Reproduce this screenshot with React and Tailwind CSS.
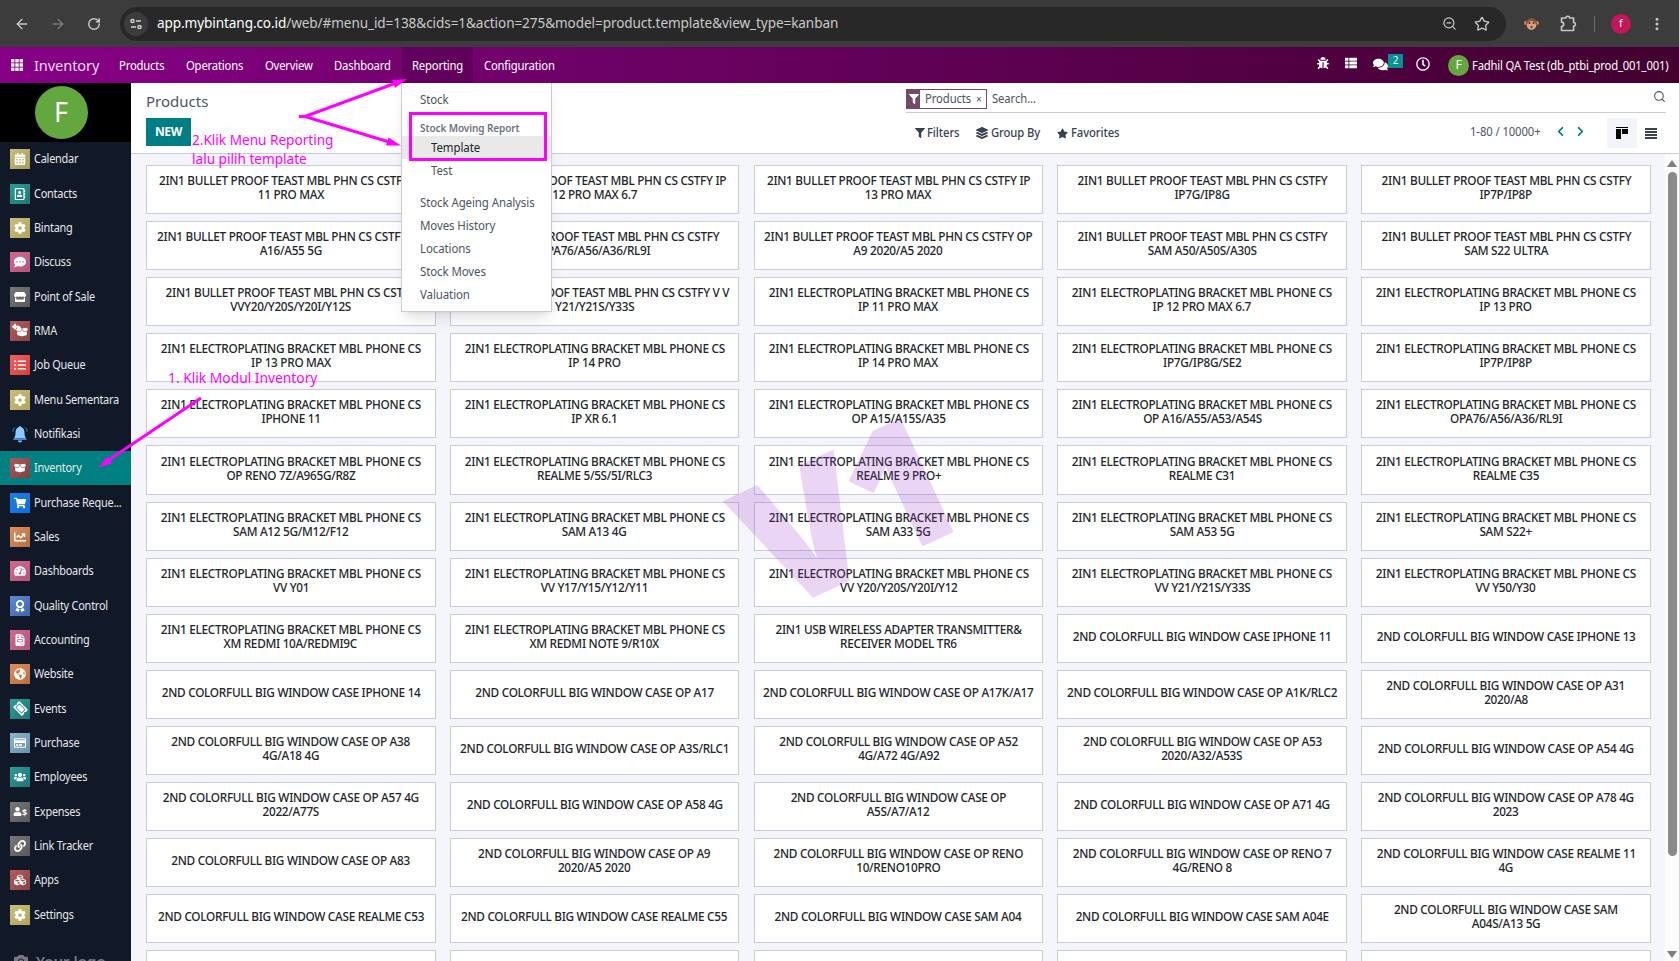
import { FaStar, FaFilter, FaLayerGroup, FaBug, FaComments, FaRegClock, FaCog, FaCalendarAlt, FaRegAddressBook, FaCommentDots, FaStore, FaBoxOpen, FaListUl, FaShoppingCart, FaChartLine, FaTachometerAlt, FaAward, FaGlobeAmericas, FaTicketAlt, FaRegCreditCard, FaUsers, FaLink, FaCubes, FaChevronLeft, FaChevronRight, FaThList, FaReply, FaUser, FaCamera } from "react-icons/fa";
import { FaFileInvoice } from "react-icons/fa6";
import { ArrowLeft, ArrowRight, RotateCw, ZoomOut, Star, MoreVertical, Search } from "lucide-react";

// Condensed label, keeps its left edge
const Narrow = ({ children }) => (
  <span className="inline-block origin-left scale-x-[0.91] whitespace-nowrap">{children}</span>
);

const RmaIcon = () => (
  <div className="relative size-5">
    <FaReply className="absolute top-[2px] left-[2px]" size={9} />
    <FaBoxOpen className="absolute right-[2px] bottom-[3px]" size={12} />
  </div>
);

const ExpenseIcon = () => (
  <div className="flex items-end">
    <FaUser size={9} />
    <span className="-mb-[2px] text-[9px] leading-[10px] font-bold">$</span>
  </div>
);

const TicketIcon = () => <FaTicketAlt className="rotate-45" size={13} />;

const BellIcon = () => (
  <svg width="16" height="18" viewBox="0 0 16 18">
    <path d="M8 1a2 2 0 0 1 1.5 1.2C12 3 12.5 5.5 12.5 8c0 3 .5 4 2 5.5h-13C3 12 3.5 11 3.5 8c0-2.500.5-5 3-5.800A2 2 0 0 1 8 1z" fill="#8fc8ff" />
    <path d="M1.5 13.5h13v1.5h-13z" fill="#3a8fe0" />
    <path d="M6 15.5h4a2 2 0 0 1-4 0z" fill="#8fc8ff" />
    <path d="M2.8 2.5C1.500 3.500 1 5 1 6.500M13.200 2.500C14.500 3.500 15 5 15 6.500" stroke="#3a8fe0" fill="none" />
  </svg>
);

const apps = [
  { name: "Calendar", icon: FaCalendarAlt, tile: "from-[#c9bf7c] to-[#a39a56]" },
  { name: "Contacts", icon: FaRegAddressBook, tile: "from-[#2b9d9a] to-[#1d7675]" },
  { name: "Bintang", icon: FaCog, tile: "from-[#c9bf7c] to-[#b0a55c]" },
  { name: "Discuss", icon: FaCommentDots, tile: "from-[#d06a8c] to-[#b5557a]" },
  { name: "Point of Sale", icon: FaStore, tile: "from-[#787878] to-[#585858]" },
  { name: "RMA", icon: RmaIcon, tile: "from-[#b45c5c] to-[#8a4444]" },
  { name: "Job Queue", icon: FaListUl, tile: "from-[#f2605a] to-[#d93c3c]" },
  { name: "Menu Sementara", icon: FaCog, tile: "from-[#c9bf7c] to-[#b0a55c]" },
  { name: "Notifikasi", icon: BellIcon, tile: "" },
  { name: "Inventory", icon: FaBoxOpen, tile: "from-[#a85a5a] to-[#7d4242]" },
  { name: "Purchase Reque...", icon: FaShoppingCart, tile: "from-[#1a7fe8] to-[#0f6fdc]" },
  { name: "Sales", icon: FaChartLine, tile: "from-[#dd8f5e] to-[#b96d3e]" },
  { name: "Dashboards", icon: FaTachometerAlt, tile: "from-[#d06a8c] to-[#b5557a]" },
  { name: "Quality Control", icon: FaAward, tile: "from-[#5c8ad6] to-[#3f66a8]" },
  { name: "Accounting", icon: FaFileInvoice, tile: "from-[#d06a8c] to-[#b5557a]" },
  { name: "Website", icon: FaGlobeAmericas, tile: "from-[#dd8f5e] to-[#b96d3e]" },
  { name: "Events", icon: TicketIcon, tile: "from-[#2b9d9a] to-[#1d7675]" },
  { name: "Purchase", icon: FaRegCreditCard, tile: "from-[#8cb4cb] to-[#6893ac]" },
  { name: "Employees", icon: FaUsers, tile: "from-[#2b9d9a] to-[#1d7675]" },
  { name: "Expenses", icon: ExpenseIcon, tile: "from-[#787878] to-[#585858]" },
  { name: "Link Tracker", icon: FaLink, tile: "from-[#787878] to-[#585858]" },
  { name: "Apps", icon: FaCubes, tile: "from-[#b45c5c] to-[#8a4444]" },
  { name: "Settings", icon: FaCog, tile: "from-[#c9bf7c] to-[#b0a55c]" },
];

const BP = "2IN1 BULLET PROOF TEAST MBL PHN CS CSTFY";
const EL = "2IN1 ELECTROPLATING BRACKET MBL PHONE CS";
const ND = "2ND COLORFULL BIG WINDOW CASE";

const products = [
  [`${BP} IP`, "11 PRO MAX"], [`${BP} IP`, "12 PRO MAX 6.7"], [`${BP} IP`, "13 PRO MAX"], [BP, "IP7G/IP8G"], [BP, "IP7P/IP8P"],
  [`${BP} OP`, "A16/A55 5G"], [BP, "OPA76/A56/A36/RL9I"], [`${BP} OP`, "A9 2020/A5 2020"], [BP, "SAM A50/A50S/A30S"], [BP, "SAM S22 ULTRA"],
  [BP, "VVY20/Y20S/Y20I/Y12S"], [`${BP} V V`, "Y21/Y21S/Y33S"], [EL, "IP 11 PRO MAX"], [EL, "IP 12 PRO MAX 6.7"], [EL, "IP 13 PRO"],
  [EL, "IP 13 PRO MAX"], [EL, "IP 14 PRO"], [EL, "IP 14 PRO MAX"], [EL, "IP7G/IP8G/SE2"], [EL, "IP7P/IP8P"],
  [EL, "IPHONE 11"], [EL, "IP XR 6.1"], [EL, "OP A15/A15S/A35"], [EL, "OP A16/A55/A53/A54S"], [EL, "OPA76/A56/A36/RL9I"],
  [EL, "OP RENO 7Z/A965G/R8Z"], [EL, "REALME 5/5S/5I/RLC3"], [EL, "REALME 9 PRO+"], [EL, "REALME C31"], [EL, "REALME C35"],
  [EL, "SAM A12 5G/M12/F12"], [EL, "SAM A13 4G"], [EL, "SAM A33 5G"], [EL, "SAM A53 5G"], [EL, "SAM S22+"],
  [EL, "VV Y01"], [EL, "VV Y17/Y15/Y12/Y11"], [EL, "VV Y20/Y20S/Y20I/Y12"], [EL, "VV Y21/Y21S/Y33S"], [EL, "VV Y50/Y30"],
  [EL, "XM REDMI 10A/REDMI9C"], [EL, "XM REDMI NOTE 9/R10X"], ["2IN1 USB WIRELESS ADAPTER TRANSMITTER&", "RECEIVER MODEL TR6"], [`${ND} IPHONE 11`], [`${ND} IPHONE 13`],
  [`${ND} IPHONE 14`], [`${ND} OP A17`], [`${ND} OP A17K/A17`], [`${ND} OP A1K/RLC2`], [`${ND} OP A31`, "2020/A8"],
  [`${ND} OP A38`, "4G/A18 4G"], [`${ND} OP A3S/RLC1`], [`${ND} OP A52`, "4G/A72 4G/A92"], [`${ND} OP A53`, "2020/A32/A53S"], [`${ND} OP A54 4G`],
  [`${ND} OP A57 4G`, "2022/A77S"], [`${ND} OP A58 4G`], [`${ND} OP`, "A5S/A7/A12"], [`${ND} OP A71 4G`], [`${ND} OP A78 4G`, "2023"],
  [`${ND} OP A83`], [`${ND} OP A9`, "2020/A5 2020"], [`${ND} OP RENO`, "10/RENO10PRO"], [`${ND} OP RENO 7`, "4G/RENO 8"], [`${ND} REALME 11`, "4G"],
  [`${ND} REALME C53`], [`${ND} REALME C55`], [`${ND} SAM A04`], [`${ND} SAM A04E`], [`${ND} SAM`, "A04S/A13 5G"],
  [], [], [], [], [],
];

const BrowserBar = () => (
  <div className="flex h-[47px] shrink-0 items-center bg-[#3c3c3c] text-[#c7c7c7]">
    <ArrowLeft className="ml-[14px]" size={16} />
    <ArrowRight className="ml-[20px] text-[#7a7a7a]" size={16} />
    <RotateCw className="ml-[21px]" size={14} strokeWidth={2.5} />
    <div className="ml-[19px] flex h-[34px] w-[1386px] items-center rounded-full bg-[#282828]">
      <div className="ml-[4px] flex size-6 items-center justify-center rounded-full bg-[#3c3c3c]">
        <svg width="12" height="12" viewBox="0 0 12 12" fill="none" stroke="#d0d0d0" strokeWidth="1.5">
          <circle cx="2.5" cy="3" r="1.6" />
          <path d="M6 3h5M1 9h5" />
          <circle cx="9.5" cy="9" r="1.6" />
        </svg>
      </div>
      <div className="ml-[9px] flex-1 text-[13.6px] tracking-[-0.1px] whitespace-nowrap text-[#c8c8c8]">
        <span className="text-white">app.mybintang.co.id</span>/web/#menu_id=138&amp;cids=1&amp;action=275&amp;model=product.template&amp;view_type=kanban
      </div>
      <ZoomOut size={15} />
      <Star className="mr-[16px] ml-[17px]" size={16} />
    </div>
    <svg className="ml-[18px]" width="15" height="14" viewBox="0 0 15 14">
      <circle cx="2" cy="6" r="2" fill="#c98a62" />
      <circle cx="13" cy="6" r="2" fill="#c98a62" />
      <circle cx="7.5" cy="6.5" r="5.5" fill="#8a5238" />
      <ellipse cx="7.5" cy="8.5" rx="4.6" ry="4.4" fill="#dba37c" />
      <circle cx="5.5" cy="6" r="1" fill="#333" />
      <circle cx="9.5" cy="6" r="1" fill="#333" />
      <circle cx="7.5" cy="10" r="1.2" fill="#7c3f30" />
    </svg>
    <svg className="ml-[21px]" width="17" height="17" viewBox="0 0 17 17" fill="none" stroke="#c7c7c7" strokeWidth="1.6" strokeLinejoin="round">
      <path d="M1.5 3h4.5a1.8 1.8 0 0 1 3.6 0h4v4.5a1.8 1.8 0 0 1 0 3.6v4.4H1.5v-4a2.200 2.200 0 0 0 0-4.400z" />
    </svg>
    <div className="ml-[17px] h-4 w-px bg-[#6a6a6a]" />
    <div className="ml-[16px] flex size-5 items-center justify-center rounded-full bg-[#c2185b] text-[11px] text-white">f</div>
    <MoreVertical className="ml-[18px]" size={16} strokeWidth={2.5} />
  </div>
);

const NavBar = () => (
  <div className="flex h-9 shrink-0 items-center bg-linear-to-r from-[#870087] to-[#42002f] text-[12.4px] tracking-[-0.2px] whitespace-nowrap text-white">
    <svg className="ml-[11px]" width="12" height="12" viewBox="0 0 12 12" fill="white">
      {[0, 4.3, 8.6].map((x) => [0, 4.3, 8.6].map((y) => <rect key={`${x}-${y}`} x={x} y={y} width="3.4" height="3.4" />))}
    </svg>
    <div className="ml-[11px] w-[74px] pt-px text-[14.6px] tracking-[-0.1px] text-[#eadcea]">Inventory</div>
    <div className="w-[67px] pt-[2px] pl-[10.5px]"><Narrow>Products</Narrow></div>
    <div className="w-[79px] pt-[2px] pl-[10.5px]"><Narrow>Operations</Narrow></div>
    <div className="w-[69px] pt-[2px] pl-[10.5px]"><Narrow>Overview</Narrow></div>
    <div className="w-[78.5px] pt-[2px] pl-[10.5px]"><Narrow>Dashboard</Narrow></div>
    <div className="flex h-full w-[71.5px] items-center bg-black/15 pt-[2px] pl-[10.5px]"><Narrow>Reporting</Narrow></div>
    <div className="pt-[2px] pl-[10.5px]"><Narrow>Configuration</Narrow></div>
    <div className="ml-auto flex items-center">
      <FaBug className="mb-[4px]" size={12} />
      <FaThList className="mb-[4px] ml-[16px]" size={12} />
      <FaComments className="mb-[2px] ml-[16px]" size={15} />
      <div className="mb-[9px] flex h-[14px] w-[15px] items-center justify-center bg-[#00938f] text-[10px]">2</div>
      <FaRegClock className="mb-[2px] ml-[13px]" size={14} />
      <div className="ml-[18px] flex size-[21px] items-center justify-center rounded-full bg-[#62a83f]">F</div>
      <div className="mr-[8px] ml-[3px] w-[199px] pt-[2px]"><Narrow>Fadhil QA Test (db_ptbi_prod_001_001)</Narrow></div>
    </div>
  </div>
);

const Sidebar = () => (
  <div className="flex w-[131px] shrink-0 flex-col overflow-hidden bg-[#111827]">
    <div className="flex h-[59px] shrink-0 justify-center bg-black pt-[3px] pr-[9px]">
      <div className="flex size-[53px] items-center justify-center rounded-full bg-[#62a83f] text-[27px] text-white">F</div>
    </div>
    {apps.map(({ name, icon: Icon, tile }) => (
      <div key={name} className={`flex h-[34.35px] shrink-0 items-center pl-[10px] ${name === "Inventory" ? "bg-[#008080]" : ""}`}>
        <div className={`flex size-5 shrink-0 items-center justify-center bg-linear-to-br text-white ${tile}`}>
          <Icon size={12} />
        </div>
        <div className="ml-[4px] text-[12px] tracking-[-0.25px] text-[#e5e7eb]"><Narrow>{name}</Narrow></div>
      </div>
    ))}
    <div className="mt-[19px] flex shrink-0 pl-[14px] text-[#77797f]">
      <FaCamera className="mt-[3px]" size={14} />
      <div className="ml-[8px] text-[15px] leading-5 font-semibold whitespace-nowrap">Your logo</div>
    </div>
  </div>
);

const ControlPanel = () => (
  <div className="flex h-[71px] shrink-0 border-b border-[#c9ccd6] bg-white pl-[15px]">
    <div className="w-[760px]">
      <div className="pt-[8px] text-[15px] leading-5 text-[#4b5563]">Products</div>
      <div className="mt-[7px] flex h-7 w-[45px] items-center justify-center bg-[#017e84] text-[12px] font-bold tracking-[-0.3px] text-white">NEW</div>
    </div>
    <div className="mr-[13px] flex-1 tracking-[-0.1px] whitespace-nowrap">
      <div className="flex h-[30px] items-center border-b border-[#c9ccd6] pt-[3px] text-[12.4px] text-[#4b5563]">
        <div className="flex h-5 w-[81px] items-center border border-[#714b67]">
          <div className="flex h-full w-[13px] shrink-0 items-center justify-center bg-[#714b67] text-white"><FaFilter size={10} /></div>
          <div className="w-[51px] pl-[5px]"><Narrow>Products</Narrow></div>
          <div className="pl-[5px] text-[10px]">×</div>
        </div>
        <div className="ml-[5px]"><Narrow>Search...</Narrow></div>
        <Search className="mb-[6px] ml-auto" size={13} />
      </div>
      <div className="flex items-center pt-[5px] text-[12.4px] text-[#374151]">
        <FaFilter className="ml-[9px]" size={10} />
        <div className="ml-[2px] w-[32px] font-medium"><Narrow>Filters</Narrow></div>
        <FaLayerGroup className="ml-[17px]" size={12} />
        <div className="ml-[3px] w-[50px] font-medium"><Narrow>Group By</Narrow></div>
        <FaStar className="ml-[16px]" size={11} />
        <div className="ml-[3px] font-medium"><Narrow>Favorites</Narrow></div>
        <div className="mb-[2px] ml-auto w-[73px] text-[#4b5563]"><Narrow>1-80 / 10000+</Narrow></div>
        <FaChevronLeft className="mb-[4px] ml-[12px] text-[#017e84]" size={11} />
        <FaChevronRight className="mb-[4px] ml-[9px] text-[#017e84]" size={11} />
        <div className="ml-[21px] flex h-[30px] w-[30px] items-center justify-center bg-[#f3f5fa]">
          <svg width="12" height="12" viewBox="0 0 12 12"><path d="M0 0h12v1H0zM0 2h5v10H0zM6 2h6v5H6z" /></svg>
        </div>
        <svg className="mr-[9px] ml-[8px]" width="12" height="11" viewBox="0 0 12 11" fill="#374151"><path d="M0 0h12v2H0zM0 3h12v2H0zM0 6h12v2H0zM0 9h12v2H0z" /></svg>
      </div>
    </div>
  </div>
);

const Kanban = () => (
  <div className="flex min-h-0 flex-1 bg-[#f5f6fb]">
    <div className="grid flex-1 auto-rows-[49.1px] grid-cols-[repeat(5,289.5px)] content-start gap-x-[14.3px] gap-y-[7px] overflow-hidden pt-[11px] pl-[15px]">
      {products.map((lines, i) => (
        <div key={i} className="flex flex-col items-center justify-center border border-[#c9ccd6] bg-white pb-[3px] text-[12.4px] leading-[14px] font-medium tracking-[-0.3px] whitespace-nowrap text-[#212529]">
          {lines.map((line) => <div key={line} className="scale-x-95">{line}</div>)}
        </div>
      ))}
    </div>
    <div className="flex w-[14px] flex-col items-center bg-[#fbfbfc]">
      <div className="mt-[6px] border-x-[5px] border-b-[7px] border-x-transparent border-b-[#7f7f7f]" />
      <div className="mt-[5px] h-[684px] w-[9px] rounded-full bg-[#8a8a8a]" />
      <div className="mt-auto mb-[3px] border-x-[5px] border-t-[7px] border-x-transparent border-t-[#7f7f7f]" />
    </div>
  </div>
);

const ReportingMenu = () => (
  <div className="absolute top-[83px] left-[401px] h-[229px] w-[151px] border border-t-0 border-[#c9ccd6] bg-white pt-[5px] text-[12.6px] leading-[23px] tracking-[-0.1px] whitespace-nowrap text-[#4b5563] shadow-lg">
    <div className="pl-[18px]"><Narrow>Stock</Narrow></div>
    <div className="mt-[8px] h-[17px] pl-[18px] text-[11px] leading-[17px] font-semibold text-[#6b7280]"><Narrow>Stock Moving Report</Narrow></div>
    <div className="bg-[#e9e9e9] pl-[29px] text-[#212529]"><Narrow>Template</Narrow></div>
    <div className="pl-[29px]"><Narrow>Test</Narrow></div>
    <div className="mt-[9px] pl-[18px]"><Narrow>Stock Ageing Analysis</Narrow></div>
    <div className="pl-[18px]"><Narrow>Moves History</Narrow></div>
    <div className="pl-[18px]"><Narrow>Locations</Narrow></div>
    <div className="pl-[18px]"><Narrow>Stock Moves</Narrow></div>
    <div className="pl-[18px]"><Narrow>Valuation</Narrow></div>
  </div>
);

const Watermark = () => (
  <div className="absolute top-[459px] left-[776px] origin-[0_156px] rotate-[-25deg] font-['Open_Sans',sans-serif] text-[176px] leading-none font-extrabold tracking-[-7px] text-[#9430c8]/20">V1</div>
);

const Annotations = () => (
  <>
    <svg className="absolute inset-0" width="1679" height="961" fill="#ff00ff">
      <g stroke="#ff00ff" strokeWidth="3" fill="none">
        <path d="M299 116.5h6L396 83M305 116.5l86 26M201 398l-93 62.5" />
        <rect x="410.5" y="113.5" width="135" height="46" />
      </g>
      <path d="M407 79l-15 1 3 8zM401 145.5l-12.500-8-2.500 8zM98 467.500l14-4-4-7z" />
    </svg>
    <div className="absolute top-[130px] left-[192px] text-[13.6px] leading-[19px] whitespace-nowrap text-[#ff00ff]">
      <div>2.Klik Menu Reporting</div>
      <div>lalu pilih template</div>
    </div>
    <div className="absolute top-[368px] left-[168px] text-[13.8px] leading-[19px] whitespace-nowrap text-[#ff00ff]">1. Klik Modul Inventory</div>
  </>
);

const App = () => {
  return (
    <div className="relative flex h-[961px] w-[1679px] flex-col overflow-hidden font-['Noto_Sans',sans-serif]">
      <BrowserBar />
      <NavBar />
      <div className="flex min-h-0 flex-1">
        <Sidebar />
        <div className="flex min-w-0 flex-1 flex-col">
          <ControlPanel />
          <Kanban />
        </div>
      </div>
      <Watermark />
      <ReportingMenu />
      <Annotations />
    </div>
  );
};

export default App;
